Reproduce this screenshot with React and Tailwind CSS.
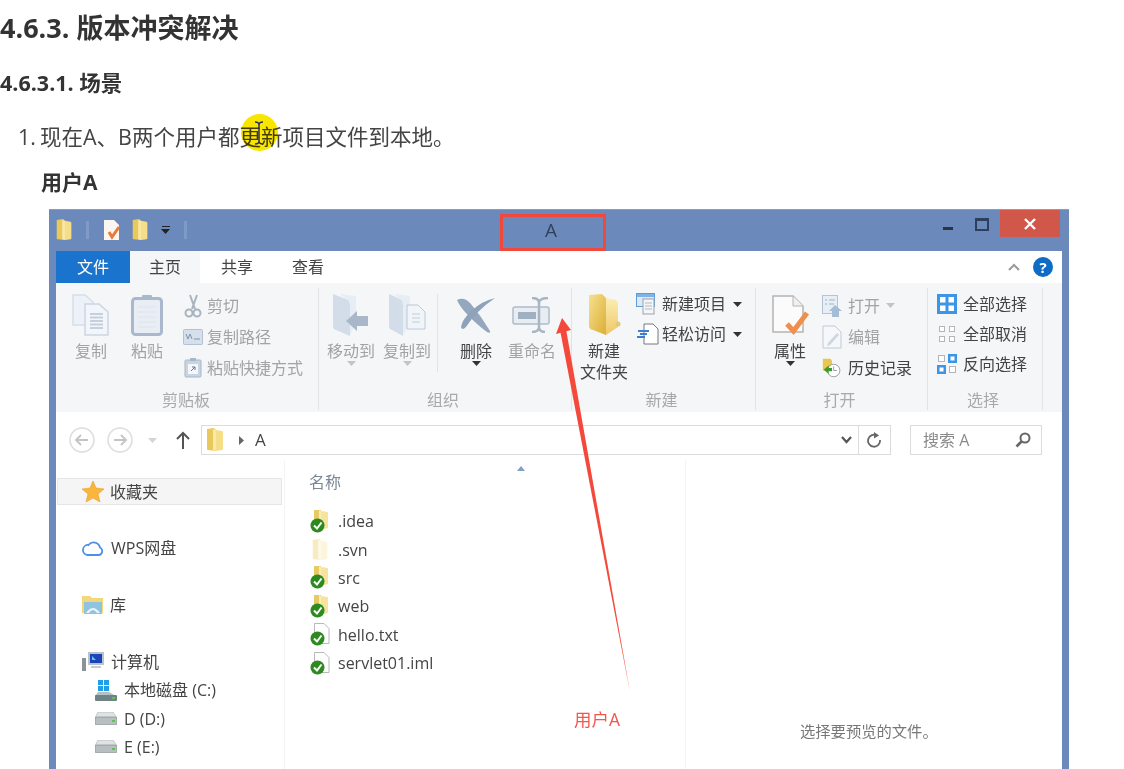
const FONT = "font-['Open_Sans','Noto_Sans_CJK_SC',sans-serif]"

const Folder = ({ w = 17, h = 24, pale = false }) => (
	<svg width={w} height={h} viewBox="0 0 17 24">
		<path d="M0 1 L7 0 L9 2 L9 23 L1 22 Q0 22 0 21 Z" fill={pale ? '#f6ecc4' : '#e9c85c'} />
		<path d="M9 2 L15 3 Q16 3 16 5 L16 21 Q16 22 15 22 L9 23 Z" fill={pale ? '#fbf5dc' : '#f6dd8a'} />
		<path d="M6 1 L9 2 L9 23 L6 22 Z" fill={pale ? '#fdf9ea' : '#f9e9a6'} />
	</svg>
)

const BigFolder = () => (
	<svg width="34" height="42" viewBox="0 0 34 42">
		<defs>
			<linearGradient id="folderLeft" x1="0" y1="0" x2="1" y2="1">
				<stop offset="0" stopColor="#f6e08e" />
				<stop offset="1" stopColor="#dcae36" />
			</linearGradient>
			<linearGradient id="folderRight" x1="0" y1="0" x2="0" y2="1">
				<stop offset="0" stopColor="#fbeeb4" />
				<stop offset="1" stopColor="#eec866" />
			</linearGradient>
		</defs>
		<path d="M2 1 L15 0 L19 4 L19 41 L6 36 Q2 35 2 32 Z" fill="url(#folderLeft)" />
		<path d="M19 4 L29 6 Q31 7 31 10 L31 33 L19 41 Z" fill="url(#folderRight)" />
		<circle cx="31" cy="30" r="2.500" fill="#e2c877" />
	</svg>
)

const CheckFile = ({ kind }) => (
	<svg width="22" height="23" viewBox="0 0 22 23">
		{kind === 'folder' ? (
			<>
				<path d="M5 0 L12 0 L12 20 L5 20 Z" fill="#e7ca66" />
				<path d="M12 1 L19 2 L19 18 L12 20 Z" fill="#f6e39c" />
				<path d="M10 0 L12 1 L12 20 L10 20 Z" fill="#f9eeb8" />
			</>
		) : (
			<path d="M5.500 .5 L15 .5 L20 5.500 L20 20.500 L5.500 20.500 Z" fill="#fff" stroke="#b9b9b9" />
		)}
		<circle cx="8.500" cy="15.500" r="7" fill="#2d8a1e" />
		<path d="M5 15.500 L8 18.500 L12.500 12.500" fill="none" stroke="#fff" strokeWidth="2" />
	</svg>
)

const PaleFolderRow = () => <div className="ml-[3px]"><Folder w={17} h={22} pale /></div>

const Caret = ({ color = '#333', className = '' }) => (
	<svg width="9" height="5" viewBox="0 0 9 5" className={className}><path d="M0 0 H9 L4.500 5 Z" fill={color} /></svg>
)

const CopyIcon = () => (
	<svg width="38" height="42" viewBox="0 0 38 42">
		<path d="M1 1 H13 L21 8 V31 H1 Z" fill="#edf2f8" stroke="#d4deea" strokeWidth="1.500" />
		<path d="M13 10 H27 L36 18 V41 H13 Z" fill="#f2f5f9" stroke="#cbd6e2" strokeWidth="1.500" />
		<path d="M18 20 H31 M18 23.500 H31 M18 27 H31 M18 30.500 H31 M18 34 H31" stroke="#c6d0dc" strokeWidth="1.800" />
	</svg>
)
const PasteIcon = () => (
	<svg width="34" height="42" viewBox="0 0 34 42">
		<rect x="2.500" y="4.500" width="29" height="36" rx="3" fill="#e9eef5" stroke="#a9b8cc" strokeWidth="3" />
		<rect x="12" y="1" width="10" height="5" rx="1" fill="#a9b8cc" />
		<path d="M8 13 H26 M8 18 H26 M8 23 H26 M8 28 H26 M8 33 H26" stroke="#dde3ec" />
	</svg>
)
const ScissorsIcon = () => (
	<svg width="18" height="24" viewBox="0 0 18 24" fill="none" stroke="#aab4c0" strokeWidth="2">
		<path d="M6 1 L11 15 M13 1 L8 15" />
		<circle cx="5" cy="19" r="3.500" />
		<circle cx="13" cy="19" r="3.500" />
	</svg>
)
const CopyPathIcon = () => (
	<svg width="20" height="16" viewBox="0 0 20 16">
		<rect x=".5" y=".5" width="19" height="15" rx="1" fill="#d6e0ec" stroke="#b3c1d2" />
		<path d="M3 5 L5 10 L7 5 L9 10 M11 10 H17" fill="none" stroke="#7f93aa" />
	</svg>
)
const ShortcutIcon = () => (
	<svg width="18" height="20" viewBox="0 0 18 20">
		<rect x="1" y="2" width="16" height="17" rx="1" fill="#c8d4e2" stroke="#a8b7c9" />
		<rect x="4" y="6" width="10" height="10" fill="#f5f7fa" />
		<rect x="6" y="0" width="6" height="3" fill="#a8b7c9" />
		<path d="M7 13 L11 9 M8 9 H11 V12" fill="none" stroke="#64798f" />
	</svg>
)
const MoveIcon = () => (
	<svg width="38" height="44" viewBox="0 0 38 44">
		<path d="M1 1 L14 6 Q18 7 18 12 V43 L4 37 Q1 36 1 33 Z" fill="#d2dde9" />
		<path d="M8 1 L24 3 V30 L18 42 V12 Q18 7 14 6 Z" fill="#e6edf4" />
		<path d="M14 28 L25 18 V23 H36 V33 H25 V38 Z" fill="#a9b8c8" />
	</svg>
)
const CopyToIcon = () => (
	<svg width="38" height="44" viewBox="0 0 38 44">
		<path d="M1 1 L12 6 Q15 7 15 12 V43 L4 37 Q1 36 1 33 Z" fill="#d2dde9" />
		<path d="M6 1 L22 3 V30 L15 42 V12 Q15 7 12 6 Z" fill="#e6edf4" />
		<path d="M19 12 H30 L37 19 V36 H19 Z" fill="#f1f5f9" stroke="#bcc9d7" />
		<path d="M24 21 H32 M24 25 H32 M24 29 H32" stroke="#c0ccd8" />
	</svg>
)
const DeleteIcon = () => (
	<svg width="40" height="38" viewBox="0 0 40 38">
		<path d="M1 4 Q8 0 15 8 Q25 20 34 35 Q35 38 31 36 Q20 28 9 16 Q3 9 1 4 Z" fill="#93a7bd" />
		<path d="M39 2 Q26 5 15 15 Q6 24 5 31 Q6 35 10 31 Q20 15 39 2 Z" fill="#8ea3ba" />
	</svg>
)
const RenameIcon = () => (
	<svg width="40" height="36" viewBox="0 0 40 36">
		<rect x="1" y="10" width="36" height="17" rx="2" fill="#e8edf3" stroke="#aebccb" strokeWidth="1.500" />
		<rect x="6" y="15" width="18" height="7" fill="#9fb0c3" />
		<path d="M20 1 Q26 1 27 5 V31 Q28 35 33 35 M36 1 Q29 1 27 5 M27 31 Q26 35 20 35" fill="none" stroke="#a7b5c4" strokeWidth="2.500" />
	</svg>
)
const NewItemIcon = () => (
	<svg width="24" height="22" viewBox="0 0 24 22">
		<rect x=".5" y=".5" width="18" height="13" fill="#dbe9f8" stroke="#5e9bd8" />
		<rect x="7" y="6" width="11" height="15" fill="#f4f5f7" stroke="#9aa3ad" />
		<path d="M9 10 H16 M9 13 H16 M9 16 H16" stroke="#b2bac3" />
		<rect x="1" y="1" width="17" height="3" fill="#7fb3e6" />
	</svg>
)
const EasyIcon = () => (
	<svg width="24" height="22" viewBox="0 0 24 22">
		<path d="M8 1 H17 L22 6 V21 H8 Z" fill="#fff" stroke="#75797e" />
		<path d="M2 8 H13 M4 11 H11 M1 14 H9" stroke="#3c7dd0" strokeWidth="1.800" />
	</svg>
)
const PropsIcon = () => (
	<svg width="40" height="42" viewBox="0 0 40 42">
		<path d="M3 2 H23 L33 12 V38 H3 Z" fill="#fbfbfb" stroke="#b4b4b4" strokeWidth="1.500" />
		<path d="M23 2 V12 H33" fill="#f0f0f0" stroke="#b4b4b4" />
		<path d="M17 30 L23.500 37 L37 19" fill="none" stroke="#ee8f4e" strokeWidth="5" />
	</svg>
)
const OpenIcon = () => (
	<svg width="20" height="22" viewBox="0 0 20 22">
		<rect x=".5" y=".5" width="15" height="18" fill="#e8eef5" stroke="#b5c3d3" />
		<path d="M3 5 H5 M7 5 H13 M3 9 H5 M7 9 H12" stroke="#9fb2c7" />
		<path d="M13 10 L20 16 H17 V22 H10 V16 H7 Z" fill="#a5bcd5" />
	</svg>
)
const EditIcon = () => (
	<svg width="20" height="24" viewBox="0 0 20 24">
		<path d="M1 1 H13 L19 7 V23 H1 Z" fill="#f5f7fa" stroke="#bfcad7" />
		<path d="M6 18 L15 8 L17 10 L8 20 L5 21 Z" fill="#cdd7e2" />
	</svg>
)
const HistoryIcon = () => (
	<svg width="24" height="24" viewBox="0 0 24 24">
		<path d="M1 1 H10 L12 3 V15 H1 Z" fill="#e9c64e" />
		<circle cx="14" cy="15" r="7.500" fill="#fff" stroke="#8d8d8d" />
		<path d="M14 10 V15 H18" fill="none" stroke="#8d8d8d" />
		<path d="M2 14 L8 9 V12 H12 V16 H8 V19 Z" fill="#3c9a2e" />
	</svg>
)
const SelectAllIcon = () => (
	<svg width="20" height="20" viewBox="0 0 20 20">
		<rect width="20" height="20" fill="#3d95e8" />
		<rect x="3" y="3" width="5.500" height="5.500" fill="#fff" /><rect x="11.500" y="3" width="5.500" height="5.500" fill="#fff" />
		<rect x="3" y="11.500" width="5.500" height="5.500" fill="#fff" /><rect x="11.500" y="11.500" width="5.500" height="5.500" fill="#fff" />
	</svg>
)
const SelectNoneIcon = () => (
	<svg width="18" height="18" viewBox="0 0 18 18" fill="#fff" stroke="#b5b5b5">
		<rect x="1.500" y="1.500" width="5" height="5" /><rect x="11.500" y="1.500" width="5" height="5" />
		<rect x="1.500" y="11.500" width="5" height="5" /><rect x="11.500" y="11.500" width="5" height="5" />
	</svg>
)
const InvertIcon = () => (
	<svg width="20" height="20" viewBox="0 0 20 20">
		<rect x="1.500" y="1.500" width="6" height="6" fill="#fff" stroke="#b5b5b5" />
		<rect x="11" y="0" width="9" height="9" fill="#3d95e8" /><rect x="13.500" y="2.500" width="4" height="4" fill="#fff" />
		<rect x="0" y="11" width="9" height="9" fill="#3d95e8" /><rect x="2.500" y="13.500" width="4" height="4" fill="#fff" />
		<rect x="12.500" y="12.500" width="6" height="6" fill="#fff" stroke="#b5b5b5" />
	</svg>
)

const NavCircle = ({ flip }) => (
	<svg width="26" height="26" viewBox="0 0 26 26" fill="none">
		<circle cx="13" cy="13" r="12" stroke="#dcdcdc" strokeWidth="1.500" />
		<path d={flip ? 'M7 13 H19 M14 8 L19 13 L14 18' : 'M19 13 H7 M12 8 L7 13 L12 18'} stroke="#c4c4c4" strokeWidth="1.800" />
	</svg>
)
const Star = () => (
	<svg width="22" height="21" viewBox="0 0 22 21">
		<path d="M11 0 L14 7 L22 8 L16 13 L18 21 L11 17 L4 21 L6 13 L0 8 L8 7 Z" fill="#f8b73c" stroke="#ee9b2c" strokeWidth=".6" />
	</svg>
)
const Cloud = () => (
	<svg width="22" height="16" viewBox="0 0 22 16" fill="none">
		<path d="M5.500 15 H17 A4 4 0 0 0 18 7.500 A6.500 6.500 0 0 0 6.500 5 A5 5 0 0 0 5.500 15 Z" stroke="#4a8fe8" strokeWidth="1.800" />
	</svg>
)
const LibIcon = () => (
	<svg width="22" height="20" viewBox="0 0 22 20">
		<path d="M0 1 H8 L10 3 H21 V18 H0 Z" fill="#f3d77c" />
		<rect x="2" y="7" width="18" height="12" fill="#8fc4e0" />
		<path d="M4 18 Q11 8 18 18 H15 Q11 12 7 18 Z" fill="#e9f2f8" />
	</svg>
)
const PcIcon = () => (
	<svg width="22" height="20" viewBox="0 0 22 20">
		<rect x="6" y="0" width="16" height="13" fill="#b9c3cc" />
		<rect x="8" y="2" width="12" height="9" fill="#1c43b8" />
		<path d="M10 4 L14 8 H10 Z" fill="#63c0ee" />
		<rect x="0" y="6" width="4" height="13" fill="#8b9298" />
		<rect x="9" y="14" width="10" height="2" fill="#c7ccd0" />
	</svg>
)
const SysDrive = () => (
	<svg width="22" height="21" viewBox="0 0 22 21">
		<rect x="3" y="0" width="5" height="5" fill="#1f9fe6" /><rect x="9" y="0" width="5" height="5" fill="#1f9fe6" />
		<rect x="3" y="6" width="5" height="5" fill="#1f9fe6" /><rect x="9" y="6" width="5" height="5" fill="#1f9fe6" />
		<path d="M3 12 H14 L21 16 H0 Z" fill="#b5bfc4" />
		<rect y="15" width="22" height="6" rx="1" fill="#6f8287" />
		<rect x="17" y="17" width="3" height="2" fill="#57c84d" />
	</svg>
)
const Drive = () => (
	<svg width="22" height="13" viewBox="0 0 22 13">
		<path d="M3 0 H18 L22 6 H0 Z" fill="#dfe3e4" stroke="#a8adb0" strokeWidth=".6" />
		<rect y="5" width="22" height="8" rx="2" fill="#b9bec1" stroke="#7a8084" strokeWidth=".6" />
		<rect x="17" y="8" width="3" height="2" fill="#57c84d" />
	</svg>
)

const BigButton = ({ icon, label, dark, caret, className = '' }) => (
	<div className={`flex w-[56px] flex-col items-center pt-[5px] ${className}`}>
		<div className="flex h-[44px] items-center justify-center">{icon}</div>
		<div className={`mt-[4px] text-center text-[16px] leading-[21px] ${dark ? 'text-[#444]' : 'text-[#a3a3a3]'}`}>{label}</div>
		{caret && <Caret color={dark ? '#333' : '#c4c4c4'} className="mt-[-1px]" />}
	</div>
)

const SmallRow = ({ icon, label, dark, iconW, gap, h, after }) => (
	<div className={`flex items-center ${h} whitespace-nowrap text-[16px] ${dark ? 'text-[#444]' : 'text-[#a3a3a3]'}`}>
		<div className={`flex justify-center ${iconW} ${gap}`}>{icon}</div>
		{label}
		{after}
	</div>
)

const Group = ({ width, label, labelClass = 'pr-[4px]', children }) => (
	<div className={`flex flex-col border-r border-[#e1e3e5] ${width}`}>
		<div className="flex h-[102px]">{children}</div>
		<div className={`text-center text-[16px] leading-[20px] text-[#a9a9a9] ${labelClass}`}>{label}</div>
	</div>
)

const files = [
	{ name: '.idea', kind: 'folder' },
	{ name: '.svn', kind: 'pale' },
	{ name: 'src', kind: 'folder' },
	{ name: 'web', kind: 'folder' },
	{ name: 'hello.txt', kind: 'file' },
	{ name: 'servlet01.iml', kind: 'file' },
]

const App = () => {
	return (
		<div className={`relative h-[769px] w-[1124px] overflow-hidden bg-white blur-[0.6px] ${FONT}`}>
			<h3 className="text-[27px] font-bold leading-[56px] text-[#333]">4.6.3. 版本冲突解决</h3>
			<h4 className="mt-[7px] text-[21.500px] font-bold leading-[40px] text-[#333]">4.6.3.1. 场景</h4>
			<div className="relative mt-[14px] flex pl-[18px] text-[21.500px] leading-[40px] text-[#444]">
				<span className="w-[22px]">1.</span>
				<span>现在A、B两个用户都更新项目文件到本地。</span>
				<div className="absolute left-[241px] top-[-3px] h-[37px] w-[37px] rounded-full bg-[#f9e600] mix-blend-multiply" />
				<svg width="10" height="24" viewBox="0 0 10 24" className="absolute left-[254px] top-[4px]" fill="none" stroke="#2b2f66" strokeWidth="1.500">
					<path d="M1 1 Q5 1 5 4 V20 Q5 23 1 23 M9 1 Q5 1 5 4 M5 20 Q5 23 9 23" />
				</svg>
			</div>
			<p className="mt-[5px] pl-[41px] text-[21px] font-bold leading-[40px] text-[#333]">用户A</p>

			<div className="ml-[49px] mt-[7px] flex h-[640px] w-[1020px] flex-col border-t border-[#8d9db8] bg-[#6b89bb] px-[7px]">
				<div className="flex h-[41px] shrink-0 items-start">
					<div className="mt-[9px] flex items-center">
						<Folder w={17} h={22} />
						<div className="ml-[13px] h-[18px] w-[3px] bg-[#7f9ac6]" />
						<svg width="18" height="22" viewBox="0 0 18 22" className="ml-[14px]">
							<path d="M1 1 H11 L16 6 V21 H1 Z" fill="#fbf7f0" />
							<path d="M6 13 L9 18 L16 8" fill="none" stroke="#ea7a3a" strokeWidth="3" />
						</svg>
						<div className="ml-[11px]"><Folder w={17} h={22} /></div>
						<div className="ml-[12px] flex flex-col items-center gap-[2px]">
							<div className="h-px w-[8px] bg-[#222]" />
							<Caret color="#222" />
						</div>
						<div className="ml-[14px] h-[18px] w-[3px] bg-[#7f9ac6]" />
					</div>
					<div className="ml-[358px] mt-[8px] text-[19px] leading-[24px] text-[#33415a]">A</div>
					<div className="ml-auto flex items-start">
						<div className="mt-[17px] h-[3px] w-[10px] bg-[#2d3440]" />
						<div className="ml-[22px] mt-[8px] h-[13px] w-[14px] border-2 border-t-[3px] border-[#2d3f5c]" />
						<div className="ml-[11px] mt-0 flex h-[27px] w-[60px] items-center justify-center bg-[#d0574a]">
							<svg width="12" height="12" viewBox="0 0 12 12"><path d="M1 1 L11 11 M11 1 L1 11" stroke="#fff" strokeWidth="2.400" /></svg>
						</div>
						<div className="w-[2px]" />
					</div>
				</div>

				<div className="flex min-h-0 flex-1 flex-col bg-white">
					<div className="flex h-[32px] shrink-0 items-center text-[16px] text-[#444]">
						<div className="flex h-full w-[74px] items-center justify-center bg-[#1a74cd] text-white">文件</div>
						<div className="flex h-full w-[70px] items-center justify-center bg-[#f5f6f7]">主页</div>
						<div className="ml-[21px] w-[32px]">共享</div>
						<div className="ml-[39px] w-[32px]">查看</div>
						<svg width="12" height="8" viewBox="0 0 12 8" className="ml-auto mr-[6px]" fill="none"><path d="M1 7 L6 2 L11 7" stroke="#9a9a9a" strokeWidth="2" /></svg>
						<div className="ml-[7px] mr-[9px] flex h-[20px] w-[20px] items-center justify-center rounded-full bg-[#0e6cc4] text-[15px] font-bold leading-none text-white">?</div>
					</div>

					<div className="flex h-[129px] shrink-0 bg-[#f5f6f7] pb-[2px] pt-[5px]">
						<Group width="w-[263px]" label="剪贴板" labelClass="pr-[2px]">
							<BigButton className="ml-[7px]" icon={<CopyIcon />} label="复制" />
							<BigButton icon={<PasteIcon />} label="粘贴" />
							<div className="ml-[8px] pt-[2px]">
								<SmallRow h="h-[31px]" iconW="w-[20px]" gap="mr-[4px]" icon={<ScissorsIcon />} label="剪切" />
								<SmallRow h="h-[31px]" iconW="w-[20px]" gap="mr-[4px]" icon={<CopyPathIcon />} label="复制路径" />
								<SmallRow h="h-[31px]" iconW="w-[20px]" gap="mr-[4px]" icon={<ShortcutIcon />} label="粘贴快捷方式" />
							</div>
						</Group>
						<Group width="w-[253px]" label="组织">
							<BigButton className="ml-[4px]" icon={<MoveIcon />} label="移动到" caret />
							<BigButton icon={<CopyToIcon />} label="复制到" caret />
							<div className="ml-[2px] mt-[6px] h-[78px] w-px bg-[#e1e3e5]" />
							<BigButton className="ml-[10px]" icon={<DeleteIcon />} label="删除" dark caret />
							<BigButton icon={<RenameIcon />} label="重命名" />
						</Group>
						<Group width="w-[184px]" label="新建">
							<BigButton className="ml-[4px]" icon={<BigFolder />} label={<>新建<br />文件夹</>} dark />
							<div className="ml-[4px] pt-px">
								<SmallRow dark h="h-[30px]" iconW="w-[24px]" gap="mr-[2px]" icon={<NewItemIcon />} label="新建项目" after={<Caret className="ml-[7px]" />} />
								<SmallRow dark h="h-[30px]" iconW="w-[24px]" gap="mr-[2px]" icon={<EasyIcon />} label="轻松访问" after={<Caret className="ml-[7px]" />} />
							</div>
						</Group>
						<Group width="w-[172px]" label="打开">
							<BigButton className="ml-[6px]" icon={<PropsIcon />} label="属性" dark caret />
							<div className="ml-[4px] pt-[2px]">
								<SmallRow h="h-[31px]" iconW="w-[20px]" gap="mr-[6px]" icon={<OpenIcon />} label="打开" after={<Caret color="#c4c4c4" className="ml-[6px]" />} />
								<SmallRow h="h-[31px]" iconW="w-[20px]" gap="mr-[6px]" icon={<EditIcon />} label="编辑" />
								<SmallRow dark h="h-[31px]" iconW="w-[20px]" gap="mr-[6px]" icon={<HistoryIcon />} label="历史记录" />
							</div>
						</Group>
						<Group width="w-[115px]" label="选择">
							<div className="ml-[9px] pt-px">
								<SmallRow dark h="h-[30px]" iconW="w-[20px]" gap="mr-[6px]" icon={<SelectAllIcon />} label="全部选择" />
								<SmallRow dark h="h-[30px]" iconW="w-[20px]" gap="mr-[6px]" icon={<SelectNoneIcon />} label="全部取消" />
								<SmallRow dark h="h-[30px]" iconW="w-[20px]" gap="mr-[6px]" icon={<InvertIcon />} label="反向选择" />
							</div>
						</Group>
					</div>

					<div className="flex h-[48px] shrink-0 items-center pb-[5px] pl-[13px] pt-[13px] text-[16px] text-[#444]">
						<NavCircle />
						<div className="ml-[12px]"><NavCircle flip /></div>
						<Caret color="#d4d4d4" className="ml-[15px]" />
						<svg width="16" height="18" viewBox="0 0 16 18" className="ml-[18px]" fill="none" stroke="#555" strokeWidth="2">
							<path d="M8 18 V2 M2 8 L8 2 L14 8" />
						</svg>
						<div className="ml-[10px] flex h-[30px] w-[690px] items-center border border-[#dcdcdc] pl-[5px]">
							<Folder w={17} h={24} />
							<svg width="5" height="9" viewBox="0 0 5 9" className="ml-[15px]"><path d="M0 0 L5 4.500 L0 9 Z" fill="#666" /></svg>
							<span className="ml-[11px] text-[17px]">A</span>
							<svg width="11" height="8" viewBox="0 0 11 8" className="ml-auto mr-[6px]" fill="none"><path d="M1 1 L5.500 6 L10 1" stroke="#555" strokeWidth="2.200" /></svg>
							<div className="flex h-full w-[32px] items-center justify-center border-l border-[#dcdcdc]">
								<svg width="15" height="16" viewBox="0 0 15 16" fill="none">
									<path d="M10 3.500 A6 6 0 1 0 13 8" stroke="#666" strokeWidth="1.800" />
									<path d="M7 0 L12 3.500 L7 6.500 Z" fill="#666" />
								</svg>
							</div>
						</div>
						<div className="ml-[19px] flex h-[30px] w-[132px] items-center border border-[#dcdcdc] pl-[12px] text-[#8a8a8a]">
							搜索 A
							<svg width="16" height="16" viewBox="0 0 16 16" className="ml-auto mr-[10px]" fill="none" stroke="#666">
								<circle cx="10" cy="6" r="4.500" strokeWidth="2" />
								<path d="M6.500 9.500 L1.500 14.500" strokeWidth="2.600" />
							</svg>
						</div>
					</div>

					<div className="flex min-h-0 flex-1 text-[16px] text-[#444]">
						<div className="w-[229px] shrink-0 border-r border-[#f4f4f4] pt-[18px]">
							<div className="ml-px flex h-[27px] w-[225px] items-center gap-[6px] border border-[#e6e6e6] bg-[#f5f5f5] pl-[24px]"><Star />收藏夹</div>
							<div className="mt-[29px] flex h-[28px] items-center gap-[7px] pl-[26px]"><Cloud />WPS网盘</div>
							<div className="mt-[29px] flex h-[28px] items-center gap-[6px] pl-[26px]"><LibIcon />库</div>
							<div className="mt-[29px] flex h-[28px] items-center gap-[7px] pl-[26px]"><PcIcon />计算机</div>
							<div className="flex h-[28.400px] items-center gap-[7px] pl-[39px]"><SysDrive />本地磁盘 (C:)</div>
							<div className="flex h-[28.400px] items-center gap-[7px] pl-[39px]"><Drive />D (D:)</div>
							<div className="flex h-[28.400px] items-center gap-[7px] pl-[39px]"><Drive />E (E:)</div>
						</div>
						<div className="w-[401px] shrink-0 border-r border-[#f4f4f4] pl-[24px] pt-[12px]">
							<div className="flex items-start">
								<span className="leading-[20px] text-[#7b8794]">名称</span>
								<svg width="8" height="5" viewBox="0 0 8 5" className="ml-[176px] mt-[-6px]"><path d="M0 5 L4 0 L8 5 Z" fill="#7f9fc4" /></svg>
							</div>
							<div className="mt-[15px]">
								{files.map(file => (
									<div className="flex h-[28.400px] items-center" key={file.name}>
										<div className="w-[29px]">
											{file.kind === 'pale' ? <PaleFolderRow /> : <CheckFile kind={file.kind} />}
										</div>
										{file.name}
									</div>
								))}
							</div>
						</div>
						<div className="flex-1 pl-[114px] pt-[259px] text-[15.300px] leading-[24px] text-[#777]">选择要预览的文件。</div>
					</div>
				</div>
			</div>

			{/* annotations drawn over the screenshot */}
			<div className="absolute left-[500px] top-[214px] h-[37px] w-[106px] border-[3px] border-[#f0493c]" />
			<svg width="100" height="400" viewBox="540 310 100 400" className="absolute left-[540px] top-[310px]">
				<path d="M560 330 L630 692 L566 329 Z" fill="#f4493a" />
				<path d="M562 318 L571 330 L556 334 Z" fill="#f4493a" />
			</svg>
			<div className="absolute left-[574px] top-[708px] text-[17.500px] leading-[22px] text-[#f4574a]">用户A</div>
		</div>
	)
}

export default App
